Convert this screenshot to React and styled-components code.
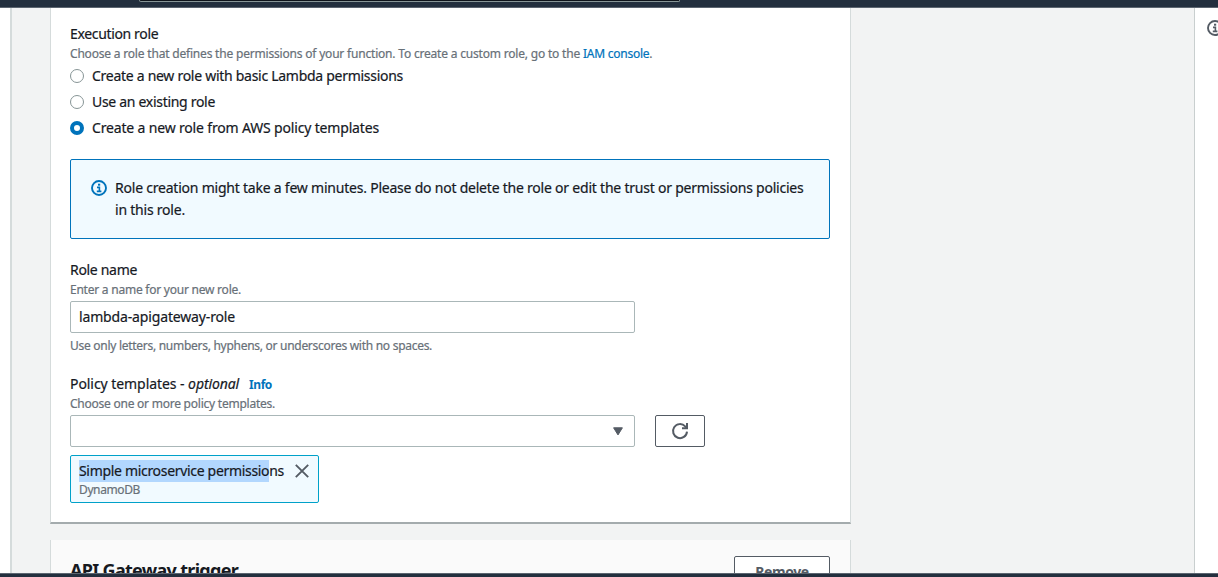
import React from "react";
import styled, { createGlobalStyle } from "styled-components";

const GlobalStyle = createGlobalStyle`
  *, *::before, *::after { box-sizing: border-box; }
  body {
    margin: 0;
    overflow: hidden;
    background: #fff;
    color: #16191f;
    font: 400 14px/22px "Noto Sans", "Open Sans", sans-serif;
    -webkit-text-stroke: 0.2px currentColor;
  }
`;

const Screen = styled.div`
  height: 577px;
  display: flex;
  flex-direction: column;
  overflow: hidden;
`;

const TopBar = styled.header`
  flex: 0 0 8px;
  padding-left: 139px;
  background: #232f3e;
  border-bottom: 1px solid #5c6570;
`;

const SearchBox = styled.div`
  width: 541px;
  height: 2px;
  background: #0f141b;
  border: 1px solid #879596;
  border-top: 0;
  border-radius: 0 0 2px 2px;
`;

const BottomBar = styled.footer`
  flex: 0 0 4px;
  background: #232f3e;
  border-top: 1px solid #5c6570;
`;

const Body = styled.div`
  flex: 1;
  min-height: 0;
  display: flex;
  overflow: hidden;
`;

const SideRail = styled.aside`
  flex: 0 0 ${(p) => p.$width}px;
  padding: 12px 0 0 ${(p) => p.$inset || 0}px;
  overflow: hidden;
  background: #fff;
  color: #545b64;
  svg { display: block; }
`;

const Main = styled.main`
  flex: 1;
  min-width: 0;
  padding-left: 38px;
  display: flex;
  flex-direction: column;
  gap: 16px;
  background: #f2f3f3;
  border-left: 2px solid #d5dbdb;
  border-right: 1px solid #c9cfcf;
`;

const Card = styled.section`
  flex: none;
  width: 801px;
  background: #fff;
  border: 1px solid #d5dbdb;
  border-top: 0;
  border-bottom: ${(p) => (p.$open ? "0" : "2px solid #a4abad")};
`;

const CardContent = styled.div`
  display: flex;
  flex-direction: column;
  padding: 15px 20px 19px 19px;
`;

const CardHeader = styled.div`
  height: 60px;
  display: flex;
  align-items: flex-start;
  justify-content: space-between;
  padding: 16px 20px 0 19px;
  background: #fafafa;
`;

const Title = styled.h2`
  margin: 3px 0 0;
  font-size: 18px;
  font-weight: 700;
  line-height: 22px;
  letter-spacing: -0.69px;
  -webkit-text-stroke: 0;
`;

const Button = styled.button`
  height: 32px;
  width: ${(p) => p.$width}px;
  display: flex;
  align-items: center;
  justify-content: center;
  padding: 0;
  background: #fff;
  border: 1px solid #545b64;
  border-radius: 2px;
  color: #545b64;
  font: 700 14px/20px "Noto Sans", "Open Sans", sans-serif;
  letter-spacing: -0.45px;
  -webkit-text-stroke: 0;
`;

const Field = styled.div`
  display: flex;
  flex-direction: column;
  align-items: flex-start;
  margin-top: ${(p) => p.$gap || 0}px;
`;

const Text = styled.span`
  white-space: nowrap;
  letter-spacing: ${(p) => p.$track}px;
`;

const Label = styled(Text)`
  font-size: 14px;
  line-height: 22px;
`;

const Hint = styled(Text)`
  margin-top: ${(p) => p.$gap ?? 0}px;
  font-size: 12px;
  line-height: 18px;
  color: #687078;
`;

const Link = styled.a`
  color: #0073bb;
  letter-spacing: -0.25px;
`;

const InfoLink = styled(Link)`
  margin-left: 10px;
  font-size: 12px;
  font-weight: 700;
  letter-spacing: -0.45px;
  -webkit-text-stroke: 0;
`;

const Optional = styled.em`
  letter-spacing: -0.1px;
`;

const RadioList = styled.div`
  display: flex;
  flex-direction: column;
  gap: 4px;
  margin-top: 2px;
`;

const RadioRow = styled.label`
  height: 22px;
  display: flex;
  align-items: center;
  gap: 8px;
`;

const Radio = styled.span`
  width: 14px;
  height: 14px;
  border-radius: 50%;
  background: #fff;
  border: ${(p) => (p.$on ? "4.5px solid #0073bb" : "1px solid #879596")};
`;

const Alert = styled.div`
  height: 80px;
  display: flex;
  align-items: flex-start;
  gap: 8px;
  margin-top: 20px;
  padding: 17px 20px;
  background: #f1faff;
  border: 1px solid #0073bb;
  border-radius: 2px;
  svg { flex: none; margin-top: 3px; color: #0073bb; }
`;

const AlertText = styled.div`
  display: flex;
  flex-direction: column;
`;

const ControlRow = styled.div`
  display: flex;
  gap: 20px;
  margin-top: ${(p) => p.$gap}px;
`;

const Control = styled.div`
  width: 565px;
  height: 32px;
  display: flex;
  align-items: center;
  justify-content: ${(p) => (p.$select ? "flex-end" : "flex-start")};
  padding: 0 ${(p) => (p.$select ? 11 : 8)}px;
  background: #fff;
  border: 1px solid #aab7b8;
  border-radius: 2px;
`;

const Token = styled.div`
  width: 249px;
  height: 48px;
  display: flex;
  justify-content: space-between;
  margin-top: 8px;
  padding: 4px 9px 0 8px;
  background: #f1faff;
  border: 1px solid #00a1c9;
  border-radius: 2px;
  svg { flex: none; margin-top: 4px; }
`;

const TokenText = styled.div`
  display: flex;
  flex-direction: column;
`;

const Selection = styled.mark`
  display: inline-block;
  height: 22px;
  color: inherit;
  background: #b2d7fe;
`;

function InfoIcon() {
  return (
    <svg width="16" height="16" viewBox="0 0 16 16" fill="none" stroke="currentColor">
      <circle cx="8" cy="8" r="7" strokeWidth="1.9" />
      <path d="M6 7.4h2.4v4M5.8 11.4h4.6" strokeWidth="1.6" />
      <path d="M7 4.7h2.2" strokeWidth="2" />
    </svg>
  );
}

function RefreshIcon() {
  return (
    <svg width="18" height="18" viewBox="0 0 18 18" fill="none" stroke="currentColor" strokeWidth="2">
      <path d="M16 9.6A7 7 0 1 1 14.2 4.4L15.8 6" />
      <path d="M16 1V6.2H11" />
    </svg>
  );
}

function CaretIcon() {
  return (
    <svg width="10" height="9" viewBox="0 0 10 9">
      <path d="M0.6 0.8h8.8L5 7.9z" fill="#545b64" stroke="#545b64" strokeLinejoin="round" />
    </svg>
  );
}

function CloseIcon() {
  return (
    <svg width="14" height="14" viewBox="0 0 14 14" fill="none" stroke="#545b64" strokeWidth="1.9">
      <path d="M0.8 0.8l12.4 12.4M13.2 0.8L0.8 13.2" />
    </svg>
  );
}

const roles = [
  { text: "Create a new role with basic Lambda permissions", track: -0.28 },
  { text: "Use an existing role", track: -0.3 },
  { text: "Create a new role from AWS policy templates", track: -0.165, on: true },
];

export default function App() {
  return (
    <Screen>
      <GlobalStyle />
      <TopBar>
        <SearchBox />
      </TopBar>
      <Body>
        <SideRail $width={10} />
        <Main>
          <Card>
            <CardContent>
              <Field>
                <Label $track={-0.35}>Execution role</Label>
                <Hint $track={-0.193}>
                  Choose a role that defines the permissions of your function. To create a custom role, go to the{" "}
                  <Link>IAM console</Link>.
                </Hint>
                <RadioList>
                  {roles.map((r) => (
                    <RadioRow key={r.text}>
                      <Radio $on={r.on} />
                      <Text $track={r.track}>{r.text}</Text>
                    </RadioRow>
                  ))}
                </RadioList>
              </Field>
              <Alert>
                <InfoIcon />
                <AlertText>
                  <Text $track={-0.22}>
                    Role creation might take a few minutes. Please do not delete the role or edit the trust or permissions policies
                  </Text>
                  <Text $track={-0.22}>in this role.</Text>
                </AlertText>
              </Alert>
              <Field $gap={20}>
                <Label $track={-0.31}>Role name</Label>
                <Hint $track={-0.234}>Enter a name for your new role.</Hint>
                <ControlRow $gap={2}>
                  <Control>
                    <Text $track={-0.15}>lambda-apigateway-role</Text>
                  </Control>
                </ControlRow>
                <Hint $gap={4} $track={-0.28}>
                  Use only letters, numbers, hyphens, or underscores with no spaces.
                </Hint>
              </Field>
              <Field $gap={18}>
                <Label $track={-0.06}>
                  Policy templates - <Optional>optional</Optional>
                  <InfoLink>Info</InfoLink>
                </Label>
                <Hint $gap={-1} $track={-0.238}>Choose one or more policy templates.</Hint>
                <ControlRow $gap={2}>
                  <Control $select>
                    <CaretIcon />
                  </Control>
                  <Button $width={50} aria-label="Refresh">
                    <RefreshIcon />
                  </Button>
                </ControlRow>
                <Token>
                  <TokenText>
                    <Text $track={-0.315}>
                      <Selection>Simple microservice permissio</Selection>ns
                    </Text>
                    <Hint $gap={-1} $track={-0.385}>DynamoDB</Hint>
                  </TokenText>
                  <CloseIcon />
                </Token>
              </Field>
            </CardContent>
          </Card>
          <Card $open>
            <CardHeader>
              <Title>API Gateway trigger</Title>
              <Button $width={96}>Remove</Button>
            </CardHeader>
          </Card>
        </Main>
        <SideRail $width={23} $inset={12}>
          <InfoIcon />
        </SideRail>
      </Body>
      <BottomBar />
    </Screen>
  );
}
